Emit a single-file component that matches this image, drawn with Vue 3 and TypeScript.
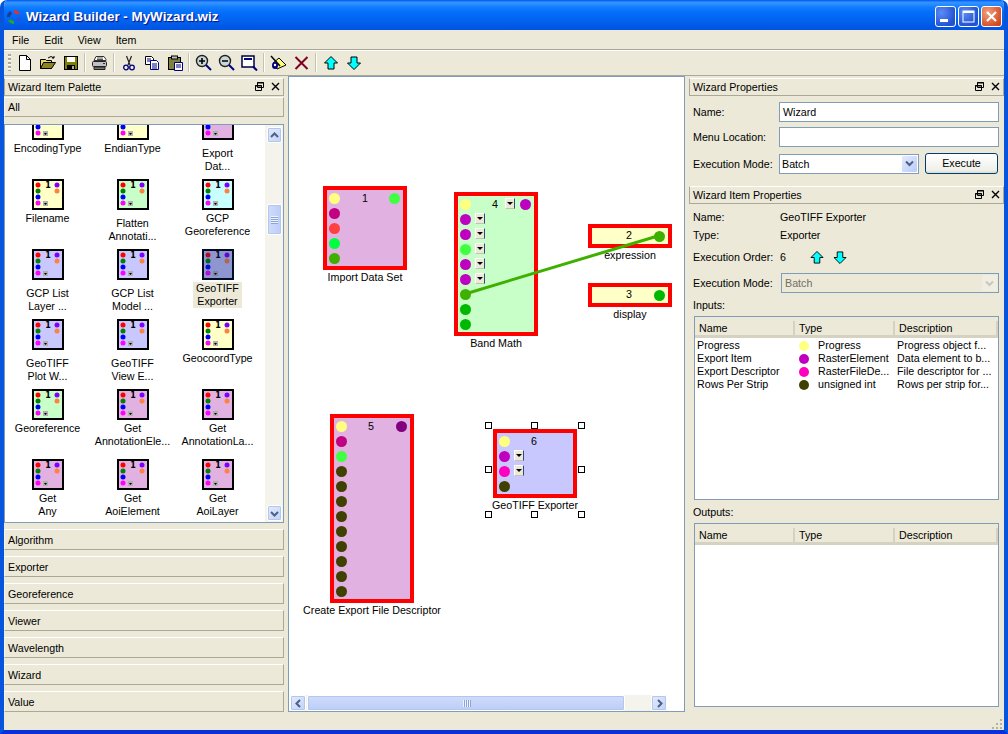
<template>
  <div class="window">
    <div class="titlebar">
      <svg class="app-icon" width="16" height="16" viewBox="0 0 16 16">
        <path d="M8 1a7 7 0 0 1 6 3.500l-3 1A4 4 0 0 0 8 4z" fill="#d33" />
        <path d="M15 8a7 7 0 0 1-3.500 6l-1.500-3A4 4 0 0 0 12 8z" fill="#2a4fd8" />
        <path d="M8 15a7 7 0 0 1-6-3.500l3-1A4 4 0 0 0 8 12z" fill="#2aa32a" />
        <path d="M1 8a7 7 0 0 1 3.500-6L6 5a4 4 0 0 0-2 3z" fill="#1b3f8f" />
      </svg>
      <span class="title-text">Wizard Builder - MyWizard.wiz</span>
      <div class="caption-buttons">
        <div class="cap-btn">
          <svg width="21" height="21" viewBox="0 0 21 21"><rect x="5" y="13" width="8" height="3" fill="#fff" /></svg>
        </div>
        <div class="cap-btn">
          <svg width="21" height="21" viewBox="0 0 21 21"><rect x="5" y="5" width="11" height="11" fill="none" stroke="#fff" /><rect x="5" y="5" width="11" height="2" fill="#fff" /></svg>
        </div>
        <div class="cap-btn close">
          <svg width="21" height="21" viewBox="0 0 21 21"><path d="M6 6l9 9M15 6l-9 9" stroke="#fff" stroke-width="2.200" /></svg>
        </div>
      </div>
    </div>

    <div class="menubar">
      <span v-for="m in menus" :key="m" class="menu-item">{{ m }}</span>
    </div>

    <div class="toolbar">
      <div class="grip"></div>
      <div class="tb">
        <svg width="16" height="16" viewBox="0 0 16 16"><path d="M2.500 .5h7l4 4v11h-11z" fill="#fff" stroke="#000" /><path d="M9.500 .5v4h4" fill="none" stroke="#000" /></svg>
      </div>
      <div class="tb">
        <svg width="18" height="16" viewBox="0 0 18 16"><path d="M1.500 4.500h5l1 1h5v8h-11z" fill="#e8d870" stroke="#000" /><path d="M1.500 13.500l3-6h12l-4 6z" fill="#8c8420" stroke="#000" /><path d="M9 3q3-3 6 0M15 1v2h-2" fill="none" stroke="#000" /></svg>
      </div>
      <div class="tb">
        <svg width="16" height="16" viewBox="0 0 16 16"><rect x="1.500" y="1.500" width="13" height="13" fill="#808000" stroke="#000" /><rect x="4" y="2" width="8" height="5" fill="#fff" /><rect x="4" y="10" width="8" height="4" fill="#000" /><rect x="9" y="11" width="2" height="3" fill="#aaa" /></svg>
      </div>
      <div class="tb-sep"></div>
      <div class="tb">
        <svg width="17" height="16" viewBox="0 0 17 16"><path d="M5 1.500h8l2 3v1H3z" fill="#fff" stroke="#333" /><rect x="1.500" y="6.500" width="14" height="5" rx="1" fill="#c0c0c0" stroke="#222" /><path d="M3 12h11v2.500H3z" fill="#777" stroke="#222" /><path d="M6 3h6M6 4.500h6" stroke="#555" /><rect x="12" y="8" width="2" height="1" fill="#333" /></svg>
      </div>
      <div class="tb-sep"></div>
      <div class="tb">
        <svg width="16" height="16" viewBox="0 0 16 16"><path d="M5.500 1l3.500 9M10.500 1L7 10" stroke="#222" fill="none" stroke-width="1.200" /><circle cx="5" cy="12.500" r="2.300" fill="none" stroke="#000080" stroke-width="1.300" /><circle cx="11" cy="12.500" r="2.300" fill="none" stroke="#000080" stroke-width="1.300" /></svg>
      </div>
      <div class="tb">
        <svg width="16" height="16" viewBox="0 0 16 16"><path d="M1.500 1.500h6l2 2v6h-8z" fill="#fff" stroke="#000" /><path d="M3 4h4M3 6h4" stroke="#000080" /><path d="M6.500 5.500h6l2 2v7h-8z" fill="#fff" stroke="#000080" /><path d="M8 9h5M8 11h5M8 13h5" stroke="#000080" /></svg>
      </div>
      <div class="tb">
        <svg width="16" height="16" viewBox="0 0 16 16"><rect x="1.500" y="2.500" width="12" height="12" fill="#808040" stroke="#000" /><rect x="4.500" y="1" width="6" height="3" fill="#c0c0c0" stroke="#000" /><path d="M7.500 7.500h8v8h-8z" fill="#fff" stroke="#000080" /><path d="M9 10h5M9 12h5" stroke="#000080" /></svg>
      </div>
      <div class="tb-sep"></div>
      <div class="tb">
        <svg width="17" height="17" viewBox="0 0 17 17"><circle cx="7" cy="7" r="5.500" fill="#c8d8d8" stroke="#222" stroke-width="1.400" /><path d="M4 7h6M7 4v6" stroke="#000" stroke-width="1.600" /><path d="M11 11l5 5" stroke="#000080" stroke-width="2" /></svg>
      </div>
      <div class="tb">
        <svg width="17" height="17" viewBox="0 0 17 17"><circle cx="7" cy="7" r="5.500" fill="#c8d8d8" stroke="#222" stroke-width="1.400" /><path d="M4 7h6" stroke="#000" stroke-width="1.600" /><path d="M11 11l5 5" stroke="#000080" stroke-width="2" /></svg>
      </div>
      <div class="tb">
        <svg width="17" height="16" viewBox="0 0 17 16"><rect x="1" y="1" width="12" height="11" fill="#fff" stroke="#000040" stroke-width="1.500" /><rect x="3" y="3" width="8" height="2" fill="#000080" /><path d="M12 11.500l4 4" stroke="#000080" stroke-width="2" /></svg>
      </div>
      <div class="tb-sep"></div>
      <div class="tb">
        <svg width="18" height="16" viewBox="0 0 18 16"><path d="M7 14l9-4-7-7-6 5z" fill="#ffff80" stroke="#000" /><path d="M1 1l9 10" stroke="#000" stroke-width="1.500" /><ellipse cx="5" cy="10.500" rx="3" ry="3.500" fill="#000080" /><circle cx="5" cy="10" r="1.200" fill="#fff" /></svg>
      </div>
      <div class="tb">
        <svg width="15" height="16" viewBox="0 0 15 16"><path d="M1.500 2l12 12M13.500 2l-12 12" stroke="#800020" stroke-width="2" /></svg>
      </div>
      <div class="tb-sep"></div>
      <div class="tb">
        <svg width="14" height="14" viewBox="0 0 14 14"><path d="M7 .5L13.500 7H10v6H4V7H.5z" fill="#00ffff" stroke="#000" /></svg>
      </div>
      <div class="tb">
        <svg width="14" height="14" viewBox="0 0 14 14"><path d="M7 13.500L13.500 7H10V1H4v6H.5z" fill="#00ffff" stroke="#000" /></svg>
      </div>
    </div>

    <div class="main">
      <aside class="left-dock">
        <div class="dock-title">
          <span>Wizard Item Palette</span>
          <div class="dock-icons">
            <svg width="9" height="9" viewBox="0 0 9 9"><path d="M2.500.5h6v5h-6zM.5 3.500h6v5h-6z" fill="#ece9d8" stroke="#000" /><path d="M2 1h7M0 4h7" stroke="#000" /></svg>
            <svg width="9" height="9" viewBox="0 0 9 9"><path d="M1 1l7 7M8 1l-7 7" stroke="#000" stroke-width="1.400" /></svg>
          </div>
        </div>
        <div class="cat-btn cat-all">All</div>
        <div class="palette">
          <div class="palette-grid">
            <div v-for="p in palette" :key="p.id" class="pal-item" :class="{ low: p.low }">
              <svg class="pal-icon" width="32" height="31" viewBox="0 0 32 31">
                <rect x="1" y="1" width="30" height="29" :fill="p.fill" stroke="#000" stroke-width="2" />
                <circle cx="6" cy="6" r="2.500" fill="#ff0000" />
                <circle cx="6" cy="12" r="2.500" fill="#008000" />
                <circle cx="6" cy="18" r="2.500" fill="#0000ff" />
                <circle cx="6" cy="24" r="2.500" fill="#ff00ff" />
                <circle cx="25" cy="6" r="2.500" fill="#8000ff" />
                <circle cx="25" cy="12" r="2.500" fill="#ff8040" />
                <rect x="11" y="22" width="5" height="5" fill="#b0b0b0" />
                <path d="M12 24h3l-1.500 2z" fill="#000" />
                <text x="16" y="9" class="pal-num">1</text>
                <rect v-if="p.selected" width="32" height="31" fill="#0a246a" opacity="0.3" />
              </svg>
              <div class="pal-label" :class="{ selected: p.selected }">
                <span v-for="l in p.lines" :key="l">{{ l }}</span>
              </div>
            </div>
          </div>
          <div class="vscroll">
            <div class="sb-btn">
              <svg width="9" height="7" viewBox="0 0 9 7"><path d="M1 5l3.500-3.500L8 5" fill="none" stroke="#4d6185" stroke-width="2" /></svg>
            </div>
            <div class="v-track">
              <div class="v-thumb"><i></i><i></i><i></i><i></i></div>
            </div>
            <div class="sb-btn">
              <svg width="9" height="7" viewBox="0 0 9 7"><path d="M1 2l3.500 3.500L8 2" fill="none" stroke="#4d6185" stroke-width="2" /></svg>
            </div>
          </div>
        </div>
        <div class="cat-list">
          <div v-for="c in categories" :key="c" class="cat-btn">{{ c }}</div>
        </div>
      </aside>

      <section class="canvas">
        <svg class="wire" width="395" height="634"><line x1="176" y1="217" x2="372" y2="158" stroke="#40b000" stroke-width="3" /></svg>
        <div
          v-for="n in nodes"
          :key="n.num"
          class="node"
          :style="{ left: n.x + 'px', top: n.y + 'px', height: n.h + 'px', background: n.fill }"
        >
          <span class="node-num" :style="{ left: n.numX + 'px', top: n.numY + 'px' }">{{ n.num }}</span>
          <span
            v-for="(d, i) in n.dots"
            :key="i"
            class="port"
            :style="{ left: d.x + 'px', top: d.y + 'px', background: d.c }"
          ></span>
          <span
            v-for="(b, i) in n.drops"
            :key="'b' + i"
            class="drop"
            :style="{ left: b.x + 'px', top: b.y + 'px' }"
          ></span>
        </div>
        <span
          v-for="n in nodes"
          :key="'l' + n.num"
          class="node-label"
          :style="{ left: n.x + 42 + 'px', top: n.labelY + 'px' }"
        >{{ n.label }}</span>
        <span
          v-for="(h, i) in handles"
          :key="'h' + i"
          class="handle"
          :style="{ left: h.x + 'px', top: h.y + 'px' }"
        ></span>
        <div class="hscroll">
          <div class="sb-btn">
            <svg width="7" height="9" viewBox="0 0 7 9"><path d="M5 1L1.500 4.500 5 8" fill="none" stroke="#4d6185" stroke-width="2" /></svg>
          </div>
          <div class="h-thumb"><i></i><i></i><i></i><i></i></div>
          <div class="sb-btn h-end">
            <svg width="7" height="9" viewBox="0 0 7 9"><path d="M2 1l3.500 3.500L2 8" fill="none" stroke="#4d6185" stroke-width="2" /></svg>
          </div>
        </div>
      </section>

      <aside class="right-dock">
        <div class="dock-title">
          <span>Wizard Properties</span>
          <div class="dock-icons">
            <svg width="9" height="9" viewBox="0 0 9 9"><path d="M2.500.5h6v5h-6zM.5 3.500h6v5h-6z" fill="#ece9d8" stroke="#000" /><path d="M2 1h7M0 4h7" stroke="#000" /></svg>
            <svg width="9" height="9" viewBox="0 0 9 9"><path d="M1 1l7 7M8 1l-7 7" stroke="#000" stroke-width="1.400" /></svg>
          </div>
        </div>
        <div class="wiz-form">
          <div class="form-row">
            <label>Name:</label>
            <div class="input">Wizard</div>
          </div>
          <div class="form-row">
            <label>Menu Location:</label>
            <div class="input"></div>
          </div>
          <div class="form-row exec-row">
            <label>Execution Mode:</label>
            <div class="input combo">
              <span>Batch</span>
              <div class="combo-btn">
                <svg width="9" height="7" viewBox="0 0 9 7"><path d="M1 1.500l3.500 3.500L8 1.500" fill="none" stroke="#4d6185" stroke-width="2" /></svg>
              </div>
            </div>
            <div class="push-btn">Execute</div>
          </div>
        </div>

        <div class="dock-title item-title">
          <span>Wizard Item Properties</span>
          <div class="dock-icons">
            <svg width="9" height="9" viewBox="0 0 9 9"><path d="M2.500.5h6v5h-6zM.5 3.500h6v5h-6z" fill="#ece9d8" stroke="#000" /><path d="M2 1h7M0 4h7" stroke="#000" /></svg>
            <svg width="9" height="9" viewBox="0 0 9 9"><path d="M1 1l7 7M8 1l-7 7" stroke="#000" stroke-width="1.400" /></svg>
          </div>
        </div>
        <div class="item-props">
          <div class="info-row r-name"><label>Name:</label><span>GeoTIFF Exporter</span></div>
          <div class="info-row r-type"><label>Type:</label><span>Exporter</span></div>
          <div class="info-row r-order">
            <label>Execution Order:</label>
            <span class="order-val">6</span>
            <svg class="order-up" width="14" height="13" viewBox="0 0 14 14"><path d="M7 .5L13.500 7H10v6H4V7H.5z" fill="#00ffff" stroke="#000" /></svg>
            <svg class="order-down" width="14" height="13" viewBox="0 0 14 14"><path d="M7 13.500L13.500 7H10V1H4v6H.5z" fill="#00ffff" stroke="#000" /></svg>
          </div>
          <div class="info-row r-mode">
            <label>Execution Mode:</label>
            <div class="input combo disabled">
              <span>Batch</span>
              <div class="combo-btn">
                <svg width="9" height="7" viewBox="0 0 9 7"><path d="M1 1.500l3.500 3.500L8 1.500" fill="none" stroke="#c9c7ba" stroke-width="2" /></svg>
              </div>
            </div>
          </div>
          <div class="group-label">Inputs:</div>
          <div class="table inputs-table">
            <div class="thead">
              <span>Name</span><span>Type</span><span>Description</span>
            </div>
            <div v-for="r in inputs" :key="r.name" class="trow">
              <span>{{ r.name }}</span>
              <span class="type-cell"><i :style="{ background: r.color }"></i>{{ r.type }}</span>
              <span>{{ r.desc }}</span>
            </div>
          </div>
          <div class="group-label outputs-label">Outputs:</div>
          <div class="table outputs-table">
            <div class="thead">
              <span>Name</span><span>Type</span><span>Description</span>
            </div>
          </div>
        </div>
      </aside>
    </div>

    <div class="statusbar">
      <svg width="12" height="12" viewBox="0 0 12 12" class="size-grip">
        <g fill="#b5b2a2">
          <rect x="9" y="1" width="2" height="2" />
          <rect x="5" y="5" width="2" height="2" /><rect x="9" y="5" width="2" height="2" />
          <rect x="1" y="9" width="2" height="2" /><rect x="5" y="9" width="2" height="2" /><rect x="9" y="9" width="2" height="2" />
        </g>
      </svg>
    </div>
  </div>
</template>

<script setup lang="ts">
interface Dot { x: number; y: number; c: string }
interface Drop { x: number; y: number }
interface NodeBox {
  num: number
  label: string
  x: number
  y: number
  h: number
  fill: string
  numX: number
  numY: number
  labelY: number
  dots: Dot[]
  drops: Drop[]
}

const PINK = '#e1b1e1'
const GREEN = '#c8ffc8'
const YELLOW = '#ffffc8'
const BLUE = '#c8c8ff'
const CYAN = '#c8ffff'

const menus = ['File', 'Edit', 'View', 'Item']
const categories = ['Algorithm', 'Exporter', 'Georeference', 'Viewer', 'Wavelength', 'Wizard', 'Value']

const palette = [
  { id: 1, fill: YELLOW, lines: ['EncodingType'] },
  { id: 2, fill: YELLOW, lines: ['EndianType'] },
  { id: 3, fill: PINK, lines: ['Export', 'Dat...'], low: true },
  { id: 4, fill: YELLOW, lines: ['Filename'] },
  { id: 5, fill: GREEN, lines: ['Flatten', 'Annotati...'], low: true },
  { id: 6, fill: CYAN, lines: ['GCP', 'Georeference'] },
  { id: 7, fill: BLUE, lines: ['GCP List', 'Layer ...'], low: true },
  { id: 8, fill: BLUE, lines: ['GCP List', 'Model ...'], low: true },
  { id: 9, fill: BLUE, lines: ['GeoTIFF', 'Exporter'], selected: true },
  { id: 10, fill: BLUE, lines: ['GeoTIFF', 'Plot W...'], low: true },
  { id: 11, fill: BLUE, lines: ['GeoTIFF', 'View E...'], low: true },
  { id: 12, fill: YELLOW, lines: ['GeocoordType'] },
  { id: 13, fill: GREEN, lines: ['Georeference'] },
  { id: 14, fill: PINK, lines: ['Get', 'AnnotationEle...'] },
  { id: 15, fill: PINK, lines: ['Get', 'AnnotationLa...'] },
  { id: 16, fill: PINK, lines: ['Get', 'Any'] },
  { id: 17, fill: PINK, lines: ['Get', 'AoiElement'] },
  { id: 18, fill: PINK, lines: ['Get', 'AoiLayer'] }
]

const inputs = [
  { name: 'Progress', type: 'Progress', color: '#ffff80', desc: 'Progress object f...' },
  { name: 'Export Item', type: 'RasterElement', color: '#c000c0', desc: 'Data element to b...' },
  { name: 'Export Descriptor', type: 'RasterFileDe...', color: '#ff00c0', desc: 'File descriptor for ...' },
  { name: 'Rows Per Strip', type: 'unsigned int', color: '#404000', desc: 'Rows per strip for...' }
]

// port columns are on a 15px pitch, offsets are inside the red border
const column = (x: number, colors: string[]): Dot[] =>
  colors.map((c, i) => ({ x, y: 3 + i * 15, c }))

const nodes: NodeBox[] = [
  {
    num: 1, label: 'Import Data Set', x: 34, y: 109, h: 84, fill: PINK,
    numX: 38, numY: 2, labelY: 193,
    dots: [
      ...column(2, ['#ffff80', '#c00080', '#ff4040', '#00ff40', '#40b000']),
      { x: 62, y: 3, c: '#40ff40' }
    ],
    drops: []
  },
  {
    num: 4, label: 'Band Math', x: 165, y: 115, h: 144, fill: GREEN,
    numX: 37, numY: 2, labelY: 259,
    dots: [
      ...column(2, ['#ffff80', '#c000c0', '#c000c0', '#40ff40', '#c000c0', '#c000c0', '#40b000', '#00b800', '#00b800']),
      { x: 62, y: 3, c: '#c000c0' }
    ],
    drops: [
      { x: 47, y: 2 }, { x: 17, y: 17 }, { x: 17, y: 32 }, { x: 17, y: 47 }, { x: 17, y: 62 }, { x: 17, y: 77 }
    ]
  },
  {
    num: 2, label: 'expression', x: 299, y: 147, h: 24, fill: YELLOW,
    numX: 37, numY: 1, labelY: 171,
    dots: [{ x: 62, y: 3, c: '#40b000' }],
    drops: []
  },
  {
    num: 3, label: 'display', x: 299, y: 206, h: 24, fill: YELLOW,
    numX: 37, numY: 1, labelY: 230,
    dots: [{ x: 62, y: 3, c: '#00b800' }],
    drops: []
  },
  {
    num: 5, label: 'Create Export File Descriptor', x: 41, y: 337, h: 189, fill: PINK,
    numX: 37, numY: 2, labelY: 526,
    dots: [
      ...column(2, ['#ffff80', '#c00080', '#40ff40', ...Array<string>(9).fill('#404000')]),
      { x: 62, y: 3, c: '#800080' }
    ],
    drops: []
  },
  {
    num: 6, label: 'GeoTIFF Exporter', x: 204, y: 352, h: 69, fill: BLUE,
    numX: 37, numY: 2, labelY: 421,
    dots: column(2, ['#ffff80', '#c000c0', '#ff00c0', '#404000']),
    drops: [{ x: 17, y: 17 }, { x: 17, y: 32 }]
  }
]

const handles: Drop[] = [
  { x: 196, y: 345 }, { x: 242, y: 345 }, { x: 289, y: 345 },
  { x: 196, y: 389 }, { x: 289, y: 389 },
  { x: 196, y: 434 }, { x: 242, y: 434 }, { x: 289, y: 434 }
]
</script>

<style>
html,
body {
  margin: 0;
  background: #fff;
}
</style>

<style scoped>
.window {
  width: 1008px;
  height: 734px;
  box-sizing: border-box;
  display: flex;
  flex-direction: column;
  overflow: hidden;
  background: #ece9d8;
  border-radius: 7px 7px 0 0;
  font-family: "Liberation Sans", Arial, sans-serif;
  font-size: 10.7px;
  color: #000;
  border-left: 4px solid #0855dd;
  border-right: 4px solid #0855dd;
  border-bottom: 4px solid #0831d9;
}

.titlebar {
  height: 30px;
  box-sizing: border-box;
  flex: none;
  margin: 0 -4px;
  display: flex;
  align-items: center;
  padding: 3px 6px 0 6px;
  background: linear-gradient(180deg, #0058ee 0%, #3593ff 8%, #288eff 14%, #127dff 24%, #036ffc 40%, #0262ee 70%, #0057e5 90%, #0054e3 100%);
}

.app-icon {
  flex: none;
}

.title-text {
  margin-left: 4px;
  font-family: "Liberation Sans", Arial, sans-serif;
  font-weight: 700;
  font-size: 13.4px;
  color: #fff;
  text-shadow: 1px 1px 1px #0f1089;
  white-space: nowrap;
}

.caption-buttons {
  margin-left: auto;
  display: flex;
  gap: 2px;
}

.cap-btn {
  width: 21px;
  height: 21px;
  border: 1px solid #fff;
  border-radius: 3px;
  box-sizing: border-box;
  background: radial-gradient(circle at 30% 30%, #5c8cf5, #1f50d0 75%, #2a5de0);
  overflow: hidden;
}

.cap-btn svg {
  display: block;
  margin: -1px;
}

.cap-btn.close {
  background: radial-gradient(circle at 30% 30%, #f0a080, #d8532a 70%, #c33a14);
}

.menubar {
  height: 19px;
  flex: none;
  display: flex;
  align-items: center;
  padding-left: 8px;
  gap: 15px;
  border-bottom: 1px solid #aca899;
  box-shadow: 0 1px 0 #fff;
}

.toolbar {
  height: 26px;
  flex: none;
  display: flex;
  align-items: center;
  padding-left: 2px;
  border-bottom: 1px solid #aca899;
  box-sizing: border-box;
}

.grip {
  width: 3px;
  height: 17px;
  margin: 0 2px 0 2px;
  background: repeating-linear-gradient(180deg, #aca899 0 2px, #fff 2px 3px, transparent 3px 4px);
}

.tb {
  width: 23px;
  height: 22px;
  display: flex;
  align-items: center;
  justify-content: center;
  flex: none;
}

.tb-sep {
  width: 1px;
  height: 19px;
  margin: 0 3px 0 2px;
  background: #c5c2b2;
  box-shadow: 1px 0 0 #fff;
  flex: none;
}

.main {
  flex: 1;
  min-height: 0;
  display: flex;
}

.left-dock {
  width: 280px;
  flex: none;
  display: flex;
  flex-direction: column;
}

.dock-title {
  height: 18px;
  margin-top: 2px;
  box-sizing: border-box;
  flex: none;
  display: flex;
  align-items: center;
  justify-content: space-between;
  padding: 0 3px 1px;
  border: 1px solid;
  border-color: #fff #aca899 #aca899 #aca899;
}

.dock-icons {
  display: flex;
  gap: 7px;
}

.dock-icons svg {
  display: block;
}

.cat-btn {
  height: 20px;
  box-sizing: border-box;
  line-height: 19px;
  padding-left: 3px;
  border: 1px solid;
  border-color: #fff #aca899 #aca899 #f5f3ea;
}

.cat-all {
  margin-top: 1px;
  flex: none;
}

.palette {
  height: 399px;
  margin-top: 7px;
  flex: none;
  box-sizing: border-box;
  border: 1px solid #7f9db9;
  background: #fff;
  display: flex;
  overflow: hidden;
}

.palette-grid {
  width: 260px;
  flex: none;
  display: grid;
  grid-template-columns: 85px 85px 85px;
  grid-auto-rows: 70px;
  align-content: start;
  margin-top: -16px;
}

.pal-item {
  display: flex;
  flex-direction: column;
  align-items: center;
  white-space: nowrap;
  line-height: 13px;
}

.pal-icon {
  flex: none;
  display: block;
}

.pal-num {
  font-family: "DejaVu Sans", sans-serif;
  font-weight: 700;
  font-size: 8px;
  text-anchor: middle;
}

.pal-label {
  margin-top: 2px;
  display: flex;
  flex-direction: column;
  align-items: center;
}

.pal-item.low .pal-label {
  margin-top: 7px;
}

.pal-label.selected {
  background: #ece9d8;
  padding: 0 3px;
}

.vscroll {
  width: 18px;
  margin-left: auto;
  flex: none;
  display: flex;
  flex-direction: column;
  background: #f4f3ec;
  padding: 2px 0 1px 2px;
  box-sizing: border-box;
}

.sb-btn {
  width: 16px;
  height: 16px;
  flex: none;
  box-sizing: border-box;
  display: flex;
  align-items: center;
  justify-content: center;
  background: linear-gradient(135deg, #e4ebfd, #c1d2fa);
  border: 1px solid #fff;
  border-radius: 2px;
  box-shadow: 0 0 0 1px #b6c6ea inset;
}

.vscroll .sb-btn {
  width: 15px;
}

.v-track {
  flex: 1;
  padding-top: 61px;
}

.v-thumb {
  width: 15px;
  height: 31px;
  box-sizing: border-box;
  display: flex;
  flex-direction: column;
  align-items: center;
  justify-content: center;
  gap: 1px;
  background: linear-gradient(90deg, #cfdcfb, #bccdf8);
  border: 1px solid #fff;
  border-radius: 2px;
  box-shadow: 0 0 0 1px #b6c6ea inset;
}

.v-thumb i {
  width: 7px;
  height: 1px;
  background: #eef3fe;
  box-shadow: 0 1px 0 #8ca3d8;
}

.cat-list {
  margin-top: 6px;
  display: flex;
  flex-direction: column;
  gap: 6px;
}

.cat-list .cat-btn {
  height: 21px;
  line-height: 20px;
}

.canvas {
  width: 397px;
  height: 636px;
  margin-left: 4px;
  flex: none;
  position: relative;
  box-sizing: border-box;
  border: 1px solid #7f9db9;
  background: #fff;
  overflow: hidden;
}

.wire {
  position: absolute;
  left: 0;
  top: 0;
  z-index: 2;
  pointer-events: none;
}

.node {
  position: absolute;
  width: 84px;
  box-sizing: border-box;
  border: 4px solid #ff0000;
}

.node-num {
  position: absolute;
  line-height: 13px;
  transform: translateX(-50%);
}

.port {
  position: absolute;
  width: 11px;
  height: 11px;
  border-radius: 50%;
}

.drop {
  position: absolute;
  width: 10px;
  height: 11px;
  box-sizing: border-box;
  background: #ece9d8;
  border: 1px solid #fff;
  border-right-color: #2a4a80;
  border-bottom-color: #c5c2b2;
}

.drop::after {
  content: "";
  position: absolute;
  left: 1px;
  top: 3px;
  border: 3px solid transparent;
  border-top: 3px solid #000;
  border-bottom: 0;
}

.node-label {
  position: absolute;
  line-height: 14px;
  white-space: nowrap;
  transform: translateX(-50%);
}

.handle {
  position: absolute;
  width: 7px;
  height: 7px;
  box-sizing: border-box;
  border: 1px solid #000;
  background: #fff;
  z-index: 3;
}

.hscroll {
  position: absolute;
  left: 1px;
  top: 618px;
  width: 377px;
  height: 16px;
  display: flex;
  background: #f4f3ec;
}

.h-thumb {
  width: 318px;
  margin-left: 1px;
  flex: none;
  display: flex;
  align-items: center;
  justify-content: center;
  gap: 1px;
  box-sizing: border-box;
  background: linear-gradient(180deg, #cfdcfb, #bccdf8);
  border: 1px solid #fff;
  border-radius: 2px;
  box-shadow: 0 0 0 1px #b6c6ea inset;
}

.h-end {
  margin-left: auto;
}

.h-thumb i {
  width: 1px;
  height: 7px;
  background: #eef3fe;
  box-shadow: 1px 0 0 #8ca3d8;
}

.right-dock {
  width: 315px;
  margin-left: 4px;
  flex: none;
  display: flex;
  flex-direction: column;
}

.wiz-form {
  padding: 6px 5px 0 4px;
  display: flex;
  flex-direction: column;
  gap: 5px;
}

.form-row {
  display: flex;
  align-items: center;
}

.form-row label {
  width: 86px;
  flex: none;
}

.input {
  width: 220px;
  height: 20px;
  box-sizing: border-box;
  border: 1px solid #7f9db9;
  background: #fff;
  line-height: 18px;
  padding-left: 3px;
}

.exec-row {
  margin-top: 1px;
}

.combo {
  width: 140px;
  display: flex;
  align-items: center;
  justify-content: space-between;
  padding-left: 2px;
  padding-right: 1px;
}

.combo-btn {
  width: 15px;
  height: 16px;
  display: flex;
  align-items: center;
  justify-content: center;
  background: linear-gradient(135deg, #e4ebfd, #b9cbf8);
  border-radius: 1px;
}

.push-btn {
  width: 73px;
  height: 21px;
  margin-left: 6px;
  box-sizing: border-box;
  border: 1px solid #003c74;
  border-radius: 3px;
  text-align: center;
  line-height: 19px;
  background: linear-gradient(180deg, #fff, #f0f0ea 85%, #dcd8cb);
}

.item-title {
  margin-top: 12px;
}

.item-props {
  padding: 0 5px 0 4px;
  flex: 1;
  display: flex;
  flex-direction: column;
}

.info-row {
  display: flex;
  align-items: center;
  height: 18px;
}

.info-row label {
  width: 87px;
  flex: none;
}

.r-name {
  margin-top: 4px;
}

.r-order {
  margin-top: 4px;
}

.order-val {
  width: 30px;
}

.order-down {
  margin-left: 9px;
}

.r-mode {
  height: 20px;
  margin-top: 7px;
}

.input.disabled {
  width: 218px;
  margin-left: 1px;
  background: #ece9d8;
  color: #716f64;
  padding-left: 3px;
}

.disabled .combo-btn {
  background: #f0eee2;
}

.group-label {
  height: 14px;
  line-height: 14px;
  margin-top: 5px;
}

.table {
  width: 305px;
  margin-left: 1px;
  margin-top: 4px;
  box-sizing: border-box;
  border: 1px solid #7f9db9;
  background: #fff;
}

.inputs-table {
  height: 184px;
}

.outputs-table {
  height: 184px;
}

.outputs-label {
  margin-top: 5px;
}

.thead {
  height: 21px;
  box-sizing: border-box;
  display: grid;
  grid-template-columns: 100px 100px 1fr;
  align-items: center;
  padding-top: 3px;
  background: #ece9d8;
  border-bottom: 3px solid #d6d2c2;
}

.thead span {
  padding-left: 4px;
  height: 14px;
  line-height: 14px;
  border-right: 2px solid #d6d2c2;
}

.trow {
  display: grid;
  grid-template-columns: 100px 100px 1fr;
  height: 13px;
  line-height: 13px;
  white-space: nowrap;
}

.trow:nth-child(2) {
  margin-top: 1px;
}

.trow span {
  padding-left: 2px;
  overflow: hidden;
}

.type-cell {
  display: flex;
  align-items: center;
}

.type-cell i {
  width: 10px;
  height: 10px;
  border-radius: 50%;
  margin: 0 9px 0 2px;
  flex: none;
}

.statusbar {
  height: 14px;
  flex: none;
  display: flex;
  justify-content: flex-end;
  align-items: flex-end;
  padding-right: 1px;
}

.size-grip {
  display: block;
}
</style>
